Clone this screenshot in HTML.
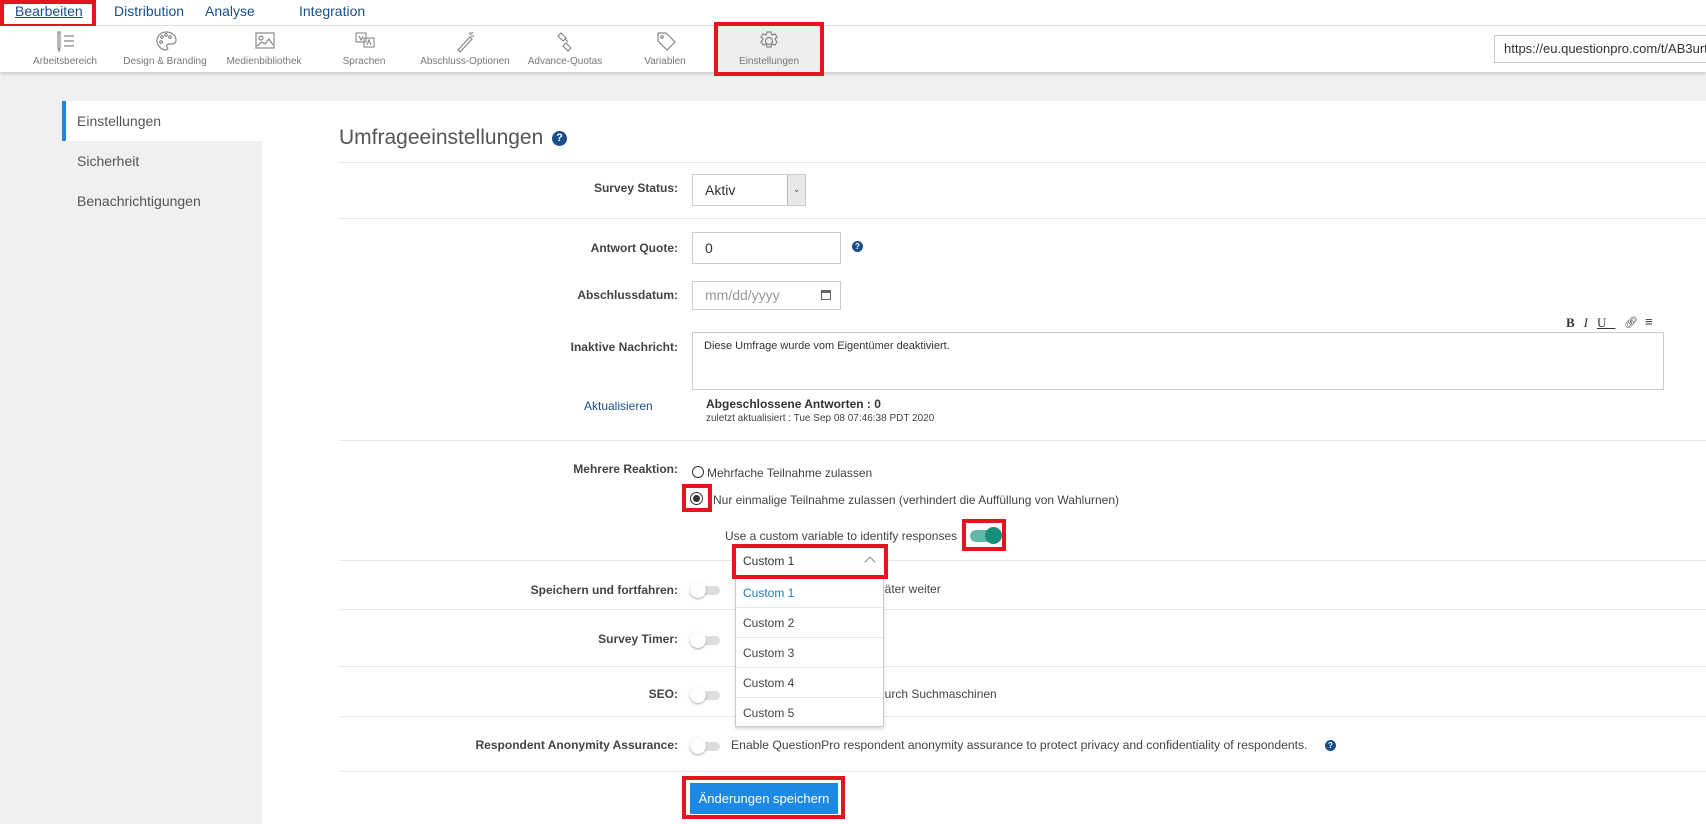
<!DOCTYPE html>
<html><head><meta charset="utf-8"><style>
*{box-sizing:border-box;margin:0;padding:0}
body{width:1706px;height:824px;overflow:hidden;background:#f0f0f0;font-family:"Liberation Sans",sans-serif;color:#333;position:relative}
.a{position:absolute}
.red{position:absolute;border:4px solid #e3161f}
.nav{left:0;top:0;width:1706px;height:26px;background:#fff;border-bottom:1px solid #ddd}
.nav span{position:absolute;top:3px;font-size:14px;color:#1a4f8b}
.tb{left:0;top:26px;width:1706px;height:46px;background:#fff;box-shadow:0 2px 3px rgba(0,0,0,.15)}
.ti{position:absolute;top:0;width:100px;height:46px;text-align:center}
.ti svg{position:absolute;left:40px;top:4px}
.ti div{position:absolute;top:30px;width:100%;font-size:10px;color:#777}
.lab{position:absolute;right:1028px;font-size:12px;font-weight:bold;color:#444;white-space:nowrap;text-align:right}
.hr{position:absolute;left:339px;right:0;height:1px;background:#e6e6e6}
.inp{position:absolute;border:1px solid #ccc;background:#fff;font-size:14px;color:#333;padding-left:12px}
.tog{position:absolute;width:30px;height:14px}
.tog i{position:absolute;left:4px;top:3px;width:26px;height:9px;border-radius:5px;background:#ddd}
.tog b{position:absolute;left:0;top:-1px;width:16px;height:16px;border-radius:50%;background:#fff;box-shadow:0 1px 2px rgba(0,0,0,.35)}
.help{position:absolute;width:13px;height:13px;border-radius:50%;background:#1a4f8b;color:#fff;font-size:10px;font-weight:bold;text-align:center;line-height:13px}
.t{position:absolute;font-size:12px;color:#444;white-space:nowrap}
.dd div{height:30px;border-bottom:1px solid #e6e6e6;padding-left:7px;line-height:30px;font-size:12px;color:#444}
</style></head><body>
<div class="a nav">
<span style="left:15px;text-decoration:underline">Bearbeiten</span>
<span style="left:114px">Distribution</span>
<span style="left:205px">Analyse</span>
<span style="left:299px">Integration</span>
</div>
<div class="red" style="left:0;top:0;width:96px;height:28px"></div>
<div class="a tb">
<div class="ti" style="left:15px"><svg width="22" height="24" viewBox="0 0 22 24" fill="none" stroke="#888" stroke-width="1.2"><path d="M3 2v16l1 3 1-3V2z M9 6h10 M9 11h10 M9 16h10"/></svg><div>Arbeitsbereich</div></div>
<div class="ti" style="left:115px"><svg width="22" height="24" viewBox="0 0 22 24" fill="none" stroke="#888" stroke-width="1.2"><path d="M11 2C5 2 2 7 2 11c0 6 6 9 9 9 2 0 2-2 1-3s0-3 2-3h3c3 0 4-2 4-4 0-4-4-8-10-8z"/><circle cx="7" cy="7" r="1.3"/><circle cx="11" cy="5" r="1.3"/><circle cx="15" cy="7" r="1.3"/><circle cx="6" cy="12" r="1.3"/></svg><div>Design &amp; Branding</div></div>
<div class="ti" style="left:214px"><svg width="22" height="24" viewBox="0 0 22 24" fill="none" stroke="#888" stroke-width="1.2"><rect x="2" y="3" width="18" height="15"/><circle cx="7" cy="8" r="2"/><path d="M3 16l5-4 3 2 4-5 4 6"/></svg><div>Medienbibliothek</div></div>
<div class="ti" style="left:314px"><svg width="22" height="24" viewBox="0 0 22 24" fill="none" stroke="#888" stroke-width="1.1"><rect x="2" y="3" width="10" height="9"/><rect x="10" y="8" width="10" height="9"/><path d="M5 6l2 4 2-4 M13 15l2-5 2 5"/></svg><div>Sprachen</div></div>
<div class="ti" style="left:415px"><svg width="22" height="24" viewBox="0 0 22 24" fill="none" stroke="#888" stroke-width="1.2"><path d="M3 20l12-13 2 2L5 22z M15 2v3 M19 6h-3 M18 2l-2 2"/></svg><div>Abschluss-Optionen</div></div>
<div class="ti" style="left:515px"><svg width="22" height="24" viewBox="0 0 22 24" fill="none" stroke="#888" stroke-width="1.2"><path d="M6 3l5 5-3 3-5-5z M10 9l3 3 M11 13l5 5-3 3-5-5z"/></svg><div>Advance-Quotas</div></div>
<div class="ti" style="left:615px"><svg width="22" height="24" viewBox="0 0 22 24" fill="none" stroke="#888" stroke-width="1.2"><path d="M3 3h8l9 9-8 8-9-9z"/><circle cx="7" cy="7" r="1.3"/></svg><div>Variablen</div></div>
<div class="ti" style="left:718px;width:102px;background:#eee"><svg width="22" height="24" viewBox="0 0 22 24" fill="none" stroke="#888" stroke-width="1.2"><path d="M9 2h4l1 3 3-1 2 3-2 2 2 3-2 3-3-1-1 3H9l-1-3-3 1-2-3 2-3-2-2 2-3 3 1z"/><circle cx="11" cy="11" r="3.5"/></svg><div>Einstellungen</div></div>
</div>
<div class="red" style="left:714px;top:22px;width:110px;height:54px"></div>
<div class="inp" style="left:1494px;top:35px;width:230px;height:28px;font-size:13px;line-height:26px;padding-left:9px">https://eu.questionpro.com/t/AB3urt</div>

<div class="a" style="left:62px;top:101px;width:1644px;height:723px;background:#fff"></div>
<div class="a" style="left:62px;top:141px;width:200px;height:683px;background:#f0f0f0"></div>
<div class="a" style="left:62px;top:101px;width:4px;height:40px;background:#1e88e5"></div>
<div class="a" style="left:77px;top:113px;font-size:14px;color:#555">Einstellungen</div>
<div class="a" style="left:77px;top:153px;font-size:14px;color:#555">Sicherheit</div>
<div class="a" style="left:77px;top:193px;font-size:14px;color:#555">Benachrichtigungen</div>

<div class="a" style="left:339px;top:126px;font-size:21px;color:#555">Umfrageeinstellungen</div>
<div class="help" style="left:552px;top:131px;width:15px;height:15px;line-height:15px;font-size:11px">?</div>
<div class="hr" style="top:162px"></div>

<div class="lab" style="top:181px;left:auto;right:1028px">Survey Status:</div>
<div class="inp" style="left:692px;top:174px;width:114px;height:32px;line-height:30px">Aktiv</div>
<div class="a" style="left:787px;top:175px;width:18px;height:30px;background:#e8e8e8;border-left:1px solid #bbb;font-size:9px;color:#555;text-align:center;line-height:28px">&#8964;</div>
<div class="hr" style="top:218px"></div>

<div class="lab" style="top:241px">Antwort Quote:</div>
<div class="inp" style="left:692px;top:232px;width:149px;height:32px;line-height:30px">0</div>
<div class="help" style="left:852px;top:241px;width:11px;height:11px;line-height:11px;font-size:8px">?</div>

<div class="lab" style="top:288px">Abschlussdatum:</div>
<div class="inp" style="left:692px;top:281px;width:149px;height:29px;line-height:27px;color:#999">mm/dd/yyyy</div>
<div class="a" style="left:821px;top:290px;width:10px;height:10px;border:1px solid #666;border-top-width:3px"></div>

<div class="a" style="left:1566px;top:315px;font-family:'Liberation Serif',serif;font-size:13px;color:#333;letter-spacing:9px"><b>B</b><i>I</i><u>U</u></div>
<div class="a" style="left:1624px;top:316px;font-size:11px;color:#333">&#x1F517;&#xFE0E;</div>
<div class="a" style="left:1645px;top:314px;font-size:13px;color:#333">&#8801;</div>
<div class="lab" style="top:340px">Inaktive Nachricht:</div>
<div class="inp" style="left:692px;top:332px;width:972px;height:58px;font-size:11px;padding:7px 11px">Diese Umfrage wurde vom Eigentümer deaktiviert.</div>

<div class="a" style="left:584px;top:399px;font-size:12px;color:#1a4f8b">Aktualisieren</div>
<div class="a" style="left:706px;top:397px;font-size:12px;font-weight:bold;color:#333">Abgeschlossene Antworten : 0</div>
<div class="a" style="left:706px;top:413px;font-size:10px;color:#444">zuletzt aktualisiert : Tue Sep 08 07:46:38 PDT 2020</div>
<div class="hr" style="top:440px"></div>

<div class="lab" style="top:462px">Mehrere Reaktion:</div>
<div class="a" style="left:692px;top:466px;width:12px;height:12px;border:1px solid #333;border-radius:50%"></div>
<div class="t" style="left:707px;top:466px">Mehrfache Teilnahme zulassen</div>
<div class="a" style="left:690px;top:492px;width:13px;height:13px;border:1px solid #333;border-radius:50%;background:#fff"><div style="margin:2px;width:7px;height:7px;border-radius:50%;background:#333"></div></div>
<div class="red" style="left:682px;top:484px;width:30px;height:28px"></div>
<div class="t" style="left:713px;top:493px">Nur einmalige Teilnahme zulassen (verhindert die Auffüllung von Wahlurnen)</div>
<div class="t" style="left:725px;top:529px">Use a custom variable to identify responses</div>
<div class="a" style="left:970px;top:530px;width:28px;height:12px;border-radius:6px;background:#5fb8a9"></div>
<div class="a" style="left:985px;top:527px;width:17px;height:17px;border-radius:50%;background:#17907b"></div>
<div class="red" style="left:962px;top:519px;width:44px;height:32px"></div>

<div class="hr" style="top:560px"></div>
<div class="lab" style="top:583px">Speichern und fortfahren:</div>
<div class="tog" style="left:690px;top:583px"><i></i><b></b></div>
<div class="t" style="left:872px;top:582px">später weiter</div>
<div class="hr" style="top:609px"></div>
<div class="lab" style="top:632px">Survey Timer:</div>
<div class="tog" style="left:690px;top:633px"><i></i><b></b></div>
<div class="hr" style="top:666px"></div>
<div class="lab" style="top:687px">SEO:</div>
<div class="tog" style="left:690px;top:688px"><i></i><b></b></div>
<div class="t" style="left:878px;top:687px">durch Suchmaschinen</div>
<div class="hr" style="top:716px"></div>
<div class="lab" style="top:738px">Respondent Anonymity Assurance:</div>
<div class="tog" style="left:690px;top:739px"><i></i><b></b></div>
<div class="t" style="left:731px;top:738px;font-size:12.2px">Enable QuestionPro respondent anonymity assurance to protect privacy and confidentiality of respondents.</div>
<div class="help" style="left:1325px;top:740px;width:11px;height:11px;line-height:11px;font-size:8px">?</div>
<div class="hr" style="top:771px"></div>

<div class="a" style="left:690px;top:783px;width:148px;height:31px;background:#1e88e5;color:#fff;font-size:13px;text-align:center;line-height:31px">Änderungen speichern</div>
<div class="red" style="left:682px;top:776px;width:163px;height:43px"></div>

<div class="a dd" style="left:735px;top:577px;width:149px;height:150px;background:#fff;border:1px solid #ccc;box-shadow:0 2px 3px rgba(0,0,0,.15)">
<div style="color:#1e7ac0">Custom 1</div><div>Custom 2</div><div>Custom 3</div><div>Custom 4</div><div style="border:0">Custom 5</div>
</div>
<div class="a" style="left:736px;top:548px;width:148px;height:27px;background:#fff;font-size:12px;color:#333;line-height:27px;padding-left:7px">Custom 1<span style="position:absolute;right:10px;top:10px;width:8px;height:8px;border-left:1px solid #888;border-top:1px solid #888;transform:rotate(45deg)"></span></div>
<div class="red" style="left:732px;top:544px;width:156px;height:35px"></div>
</body></html>
